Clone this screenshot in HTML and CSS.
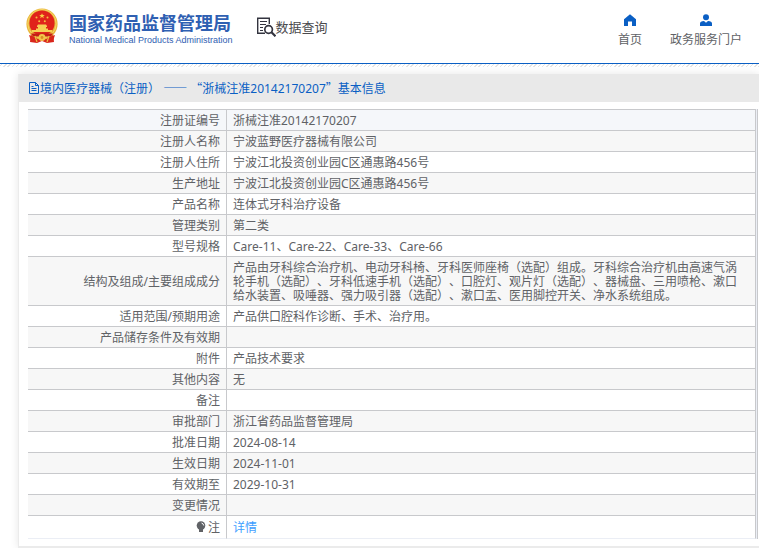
FILE: index.html
```html
<!DOCTYPE html>
<html lang="zh-CN">
<head>
<meta charset="utf-8">
<title>国家药品监督管理局 数据查询</title>
<link rel="stylesheet" href="styles.css">
</head>
<body>
<header class="top">
  <a class="brand" href="#">
    <svg class="emblem" viewBox="0 0 32 36" aria-hidden="true">
      <path d="M5 25 L4 34 L11 35 L16 33 L21 35 L28 34 L27 25Z" fill="#d9261c"/>
      <circle cx="16" cy="16" r="15.6" fill="#e9b63c"/>
      <circle cx="16" cy="15.6" r="14.2" fill="none" stroke="#f6d565" stroke-width="1"/>
      <circle cx="16" cy="15" r="12.6" fill="#e0231b"/>
      <path d="M16 5.2l.8 1.8 2 .1-1.6 1.2.6 1.9-1.8-1.1-1.8 1.1.6-1.9-1.6-1.2 2-.1z" fill="#f9cf45"/>
      <g fill="#f4c140"><circle cx="10.5" cy="9.6" r="1"/><circle cx="21.5" cy="9.6" r="1"/><circle cx="13.2" cy="13.2" r="1"/><circle cx="18.8" cy="13.2" r="1"/></g>
      <path d="M11 18l1-1.6h8l1 1.600v1h-1v1.500h2V22h4v2H6v-2h4v-1.500h2V19h-1z" fill="#f6cf55"/>
      <path d="M5 25.500h22l-2 3H7z" fill="#c41d16"/>
      <path d="M3 27l8 3-1 4-5-1zM29 27l-8 3 1 4 5-1z" fill="#d9261c"/>
      <circle cx="16" cy="29.500" r="3.400" fill="#f3c64b"/>
      <circle cx="16" cy="29.500" r="1.400" fill="#d98b25"/>
      <path d="M9 28l2 6M23 28l-2 6" stroke="#eebd43" stroke-width="1.200"/>
    </svg>
    <span class="names">
      <span class="name-zh">国家药品监督管理局</span>
      <span class="name-en">National Medical Products Administration</span>
    </span>
  </a>
  <a class="search" href="#">
    <svg class="search-icon" viewBox="0 0 20 20" fill="none" stroke="#33343f" aria-hidden="true">
      <path d="M9 16.300H1.700V1.200H13.300V7" stroke-width="1.400"/>
      <path d="M4 4.500h7M4 7.500h6M4 10.500h3M4 13.500h3" stroke-width="1.200"/>
      <circle cx="12.600" cy="12.500" r="3.800" stroke-width="1.700"/>
      <path d="M15.500 15.300l4 4" stroke-width="2.200"/>
    </svg>
    <span>数据查询</span>
  </a>
  <nav class="nav">
    <a href="#">
      <svg class="nav-icon" viewBox="0 0 12 12" fill="#0a5fc4" aria-hidden="true"><path d="M6 .3L12 5.200V12H8V7.500H4V12H0V5.200z"/></svg>
      <span>首页</span>
    </a>
    <a href="#">
      <svg class="nav-icon" viewBox="0 0 12 12" fill="#0a5fc4" aria-hidden="true"><circle cx="6" cy="3.200" r="3"/><path d="M0 12V9.500Q0 7 4 6.900L6 8.700 8 6.900Q12 7 12 9.500V12z"/></svg>
      <span>政务服务门户</span>
    </a>
  </nav>
</header>
<div class="hatch"></div>
<main class="panel">
  <h1 class="title">
    <svg class="doc-icon" viewBox="0 0 12 12" fill="none" stroke="#0a5fc4" aria-hidden="true"><path d="M1.500.5h6l3 3v8h-9zM7.500.5v3h3M3.500 4.500h2M3.500 6.500h5M3.500 8.500h5"/></svg>
    <span>境内医疗器械（注册） <span class="wide">——</span> <span class="wide">“</span>浙械注准20142170207<span class="wide">”</span>基本信息</span>
  </h1>
  <div class="content">
    <div class="frame">
      <table class="info">
        <tbody>
        <tr class="current"><th scope="row">注册证编号</th><td>浙械注准20142170207</td></tr>
        <tr><th scope="row">注册人名称</th><td>宁波蓝野医疗器械有限公司</td></tr>
        <tr><th scope="row">注册人住所</th><td>宁波江北投资创业园C区通惠路456号</td></tr>
        <tr><th scope="row">生产地址</th><td>宁波江北投资创业园C区通惠路456号</td></tr>
        <tr><th scope="row">产品名称</th><td>连体式牙科治疗设备</td></tr>
        <tr><th scope="row">管理类别</th><td>第二类</td></tr>
        <tr><th scope="row">型号规格</th><td>Care-11、Care-22、Care-33、Care-66</td></tr>
        <tr><th scope="row">结构及组成/主要组成成分</th><td>产品由牙科综合治疗机、电动牙科椅、牙科医师座椅（选配）组成。牙科综合治疗机由高速气涡轮手机（选配）、牙科低速手机（选配）、口腔灯、观片灯（选配）、器械盘、三用喷枪、漱口给水装置、吸唾器、强力吸引器（选配）、漱口盂、医用脚控开关、净水系统组成。</td></tr>
        <tr><th scope="row">适用范围/预期用途</th><td>产品供口腔科作诊断、手术、治疗用。</td></tr>
        <tr><th scope="row">产品储存条件及有效期</th><td></td></tr>
        <tr><th scope="row">附件</th><td>产品技术要求</td></tr>
        <tr><th scope="row">其他内容</th><td>无</td></tr>
        <tr><th scope="row">备注</th><td></td></tr>
        <tr><th scope="row">审批部门</th><td>浙江省药品监督管理局</td></tr>
        <tr><th scope="row">批准日期</th><td>2024-08-14</td></tr>
        <tr><th scope="row">生效日期</th><td>2024-11-01</td></tr>
        <tr><th scope="row">有效期至</th><td>2029-10-31</td></tr>
        <tr><th scope="row">变更情况</th><td></td></tr>
        <tr class="note"><th scope="row"><svg class="bulb" viewBox="0 0 10 12" aria-hidden="true"><circle cx="5" cy="4.600" r="4.300" fill="#606266"/><path d="M3 8h4v3H3z" fill="#606266"/><path d="M5.500 2Q7.500 2.500 7.700 4.500" fill="none" stroke="#fff"/></svg>注</th><td><a href="#">详情</a></td></tr>
        </tbody>
      </table>
    </div>
  </div>
</main>
</body>
</html>
```
FILE: styles.css
```css
* {
  box-sizing: border-box;
}

body {
  margin: 0;
  background: #fff;
  color: #606266;
  font: 12px/14px "Noto Sans", "Noto Sans CJK SC", sans-serif;
  text-spacing-trim: space-all;
}

a {
  color: inherit;
  text-decoration: none;
}

svg {
  display: block;
  flex: none;
}

.top {
  display: flex;
  align-items: flex-start;
  height: 64px;
  padding: 8px 17px 0 26px;
  border-bottom: 1px solid #0a5fc4;
}

.brand {
  display: flex;
  gap: 11px;
  color: #2f60b2;
}

.emblem {
  width: 32px;
  height: 36px;
}

.names {
  display: flex;
  flex-direction: column;
  padding-top: 2px;
  white-space: nowrap;
}

.name-zh {
  font: bold 18px/24px "Noto Sans CJK SC", sans-serif;
}

.name-en {
  font: 9px/12px "Liberation Sans", sans-serif;
}

.search {
  display: flex;
  align-items: center;
  margin: 9px 0 0 23px;
  color: #4a4a4d;
  font-size: 13px;
  line-height: 20px;
}

.search-icon {
  width: 20px;
  height: 20px;
}

.nav {
  display: flex;
  gap: 28px;
  margin-left: auto;
  padding-top: 6px;
}

.nav a {
  display: flex;
  flex-direction: column;
  align-items: center;
  gap: 7px;
}

.nav-icon {
  width: 12px;
  height: 12px;
}

.hatch {
  height: 3px;
  background: repeating-linear-gradient(135deg, #fff 0 1px, #e4e4e4 1px 2px, #fff 2px 3px);
}

.panel {
  margin: 7px 0 0 18px;
  border: solid #ebebeb;
  border-width: 0 0 2px 1px;
  box-shadow: 0 0 8px rgba(0, 0, 0, 0.1);
}

.title {
  display: flex;
  align-items: center;
  height: 28px;
  margin: 0;
  padding-left: 9px;
  background: #e9e9e9;
  color: #0a5fc4;
  font-size: 12px;
  font-weight: normal;
  white-space: nowrap;
}

.wide {
  font-family: "Noto Sans CJK SC", sans-serif;
}

.doc-icon {
  width: 12px;
  height: 12px;
}

.content {
  padding: 7px 1px 7px 9px;
}

.frame {
  padding-right: 1px;
  border-right: 1px solid #c8c9cc;
  background: #ebeef5;
}

.info {
  width: 100%;
  border-collapse: separate;
  border-spacing: 0;
  border-top: 1px solid #c8c9cc;
  background: #fff;
}

.info th,
.info td {
  height: 21px;
  padding: 4px 6px 2px;
  border: solid #c8c9cc;
  border-width: 0 1px 1px 0;
  font-weight: normal;
}

.info th {
  width: 199px;
  text-align: right;
}

.info td {
  padding-right: 12px;
  text-align: left;
}

.info tr:nth-child(even) {
  background: #f7f7f7;
}

.info .current {
  background: #f5f7fa;
}

.info .note th,
.info .note td {
  height: 23px;
  border-bottom-color: #ebeef5;
}

.note a {
  color: #409eff;
}

.bulb {
  display: inline-block;
  width: 10px;
  height: 12px;
  margin-right: 2px;
  vertical-align: -1px;
}
```
